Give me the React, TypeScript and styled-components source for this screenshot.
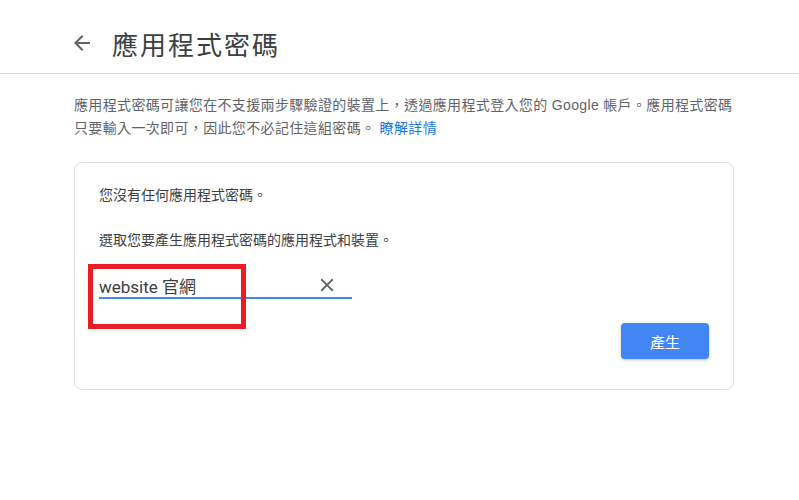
import styled, { createGlobalStyle } from 'styled-components';

const GlobalStyle = createGlobalStyle`
    html, body {
        margin: 0;
        padding: 0;
        background: #ffffff;
    }
    body {
        font-family: Roboto, "Noto Sans CJK TC", sans-serif;
        color: #3c4043;
    }
`;

const Page = styled.div`
    width: 799px;
    height: 500px;
    overflow: hidden;
`;

const Header = styled.header`
    height: 74px;
    border-bottom: 1px solid #dadce0;
    display: flex;
    align-items: center;
    padding: 13px 0 0 70px;
    box-sizing: border-box;
`;

const BackButton = styled.button`
    width: 24px;
    height: 24px;
    padding: 0;
    border: none;
    background: none;
    display: flex;
    align-items: center;
    justify-content: center;
    color: #5f6368;
    margin-right: 18px;
    cursor: pointer;
`;

const Title = styled.h1`
    margin: 0;
    font-size: 26px;
    font-weight: 400;
    letter-spacing: 2px;
    color: #3c4043;
    font-family: "Noto Sans CJK TC", sans-serif;
`;

const Content = styled.main`
    padding: 20px 0 0 74px;
    width: 660px;
`;

const Description = styled.p`
    margin: 0;
    font-size: 14px;
    line-height: 23px;
    letter-spacing: 0.35px;
    color: #5f6368;
    font-family: Arial, "Liberation Sans", "Noto Sans CJK TC", sans-serif;
`;

const Link = styled.a`
    color: #1a73e8;
    text-decoration: none;
`;

const Card = styled.section`
    margin-top: 22px;
    border: 1px solid #dadce0;
    border-radius: 8px;
    padding: 21px 24px 30px 24px;
    height: 228px;
    box-sizing: border-box;
    display: flex;
    flex-direction: column;
`;

const CardText = styled.p`
    margin: 0 0 25px 0;
    font-size: 14px;
    line-height: 20px;
    color: #3c4043;
    font-family: "Noto Sans CJK TC", sans-serif;
`;

const FieldWrap = styled.div`
    position: relative;
    width: 253px;
    margin-top: -5px;
`;

const Field = styled.div`
    display: flex;
    align-items: center;
    height: 30px;
    padding-top: 4px;
    border-bottom: 2px solid #4285f4;
    box-sizing: border-box;
`;

const FieldValue = styled.span`
    flex: 1;
    font-size: 17px;
    color: #3c4043;
    font-family: Roboto, "Noto Sans CJK TC", sans-serif;
`;

const ClearButton = styled.button`
    border: none;
    background: none;
    padding: 0;
    width: 24px;
    height: 24px;
    display: flex;
    align-items: center;
    justify-content: center;
    color: #5f6368;
    margin-right: 13px;
`;

const Highlight = styled.div`
    position: absolute;
    left: -11px;
    top: -5px;
    width: 158px;
    height: 65px;
    border: 5px solid #ed1c24;
    box-sizing: border-box;
    pointer-events: none;
`;

const Actions = styled.div`
    margin-top: auto;
    display: flex;
    justify-content: flex-end;
`;

const PrimaryButton = styled.button`
    width: 88px;
    height: 36px;
    border: none;
    border-radius: 4px;
    background: #4285f4;
    color: #ffffff;
    font-size: 15px;
    font-family: "Noto Sans CJK TC", sans-serif;
    box-shadow: 0 1px 3px rgba(60, 64, 67, 0.35);
    cursor: pointer;
`;

function ArrowBack() {
    return (
        <svg width="24" height="24" viewBox="0 0 24 24" fill="currentColor">
            <path d="M20 11H7.83l5.59-5.59L12 4l-8 8 8 8 1.41-1.41L7.83 13H20v-2z" />
        </svg>
    );
}

function CloseIcon() {
    return (
        <svg width="22" height="22" viewBox="0 0 24 24" fill="currentColor">
            <path d="M19 6.41L17.59 5 12 10.59 6.41 5 5 6.41 10.59 12 5 17.59 6.41 19 12 13.41 17.59 19 19 17.59 13.41 12z" />
        </svg>
    );
}

function App() {
    return (
        <Page>
            <GlobalStyle />
            <Header>
                <BackButton aria-label="返回">
                    <ArrowBack />
                </BackButton>
                <Title>應用程式密碼</Title>
            </Header>
            <Content>
                <Description>
                    應用程式密碼可讓您在不支援兩步驟驗證的裝置上，透過應用程式登入您的 Google 帳戶。應用程式密碼只要輸入一次即可，因此您不必記住這組密碼。{' '}
                    <Link href="#">瞭解詳情</Link>
                </Description>
                <Card>
                    <CardText>您沒有任何應用程式密碼。</CardText>
                    <CardText>選取您要產生應用程式密碼的應用程式和裝置。</CardText>
                    <FieldWrap>
                        <Field>
                            <FieldValue>website 官網</FieldValue>
                            <ClearButton aria-label="清除">
                                <CloseIcon />
                            </ClearButton>
                        </Field>
                        <Highlight />
                    </FieldWrap>
                    <Actions>
                        <PrimaryButton>產生</PrimaryButton>
                    </Actions>
                </Card>
            </Content>
        </Page>
    );
}

export default App;
